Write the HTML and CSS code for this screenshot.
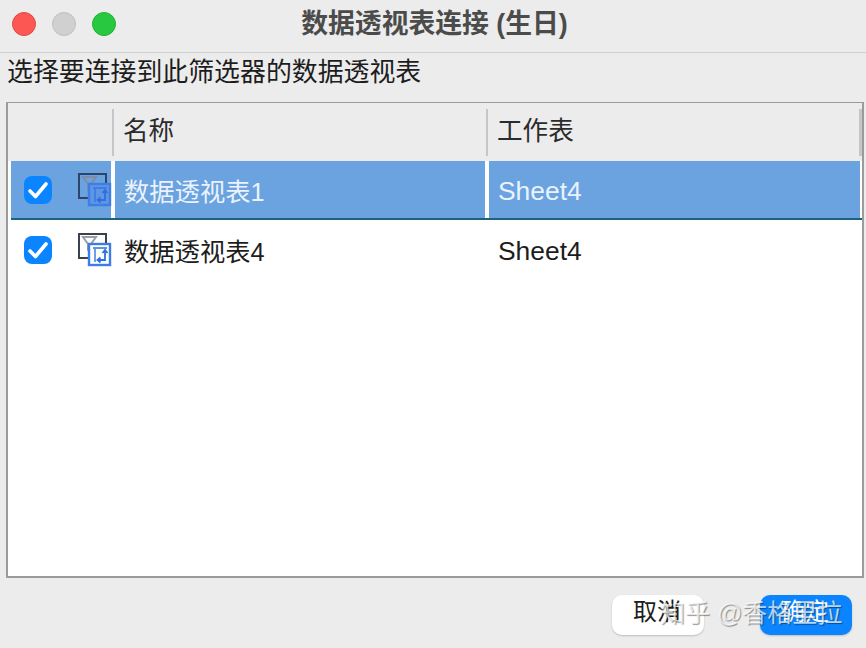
FILE: index.html
```html
<!DOCTYPE html>
<html lang="zh-CN">
<head>
    <meta charset="UTF-8">
    <title>数据透视表连接 (生日)</title>
    <link rel="stylesheet" href="styles.css">
</head>
<body>
    <div class="window">
        <header class="titlebar">
            <div class="lights">
                <span class="light red"></span>
                <span class="light gray"></span>
                <span class="light green"></span>
            </div>
            <h1>数据透视表连接 (生日)</h1>
        </header>
        <p class="prompt">选择要连接到此筛选器的数据透视表</p>
        <div class="table-frame">
            <div class="table-head">
                <div class="head-cell head-check"></div>
                <div class="head-cell">名称</div>
                <div class="head-cell">工作表</div>
            </div>
            <div class="row selected">
                <div class="cell cell-check">
                    <span class="checkbox">
                        <svg viewBox="0 0 28 28" width="28" height="28"><path d="M6 15l5.500 5.500L22 8" fill="none" stroke="#fff" stroke-width="3.600" stroke-linecap="round" stroke-linejoin="round"/></svg>
                    </span>
                    <svg class="table-icon" viewBox="0 0 34 34" width="34" height="34">
                        <rect x="1" y="1" width="27" height="24" fill="none" stroke="#2f4468" stroke-width="2"/>
                        <path d="M5 4h13l-5 7v8l-3-2v-6z" fill="none" stroke="#7f8ea8" stroke-width="2"/>
                        <rect x="11" y="11" width="21" height="21" fill="#5f96e2" stroke="#3d7ee6" stroke-width="2.400"/>
                        <path d="M15 15h14M17 15v14" fill="none" stroke="#3d7ee6" stroke-width="1.800"/>
                        <path d="M27 17v10h-7M24.500 20l2.500-3 2.500 3M22.500 24.500l-3 2.500 3 2.500" fill="none" stroke="#2f6fe0" stroke-width="1.800"/>
                    </svg>
                </div>
                <div class="cell">数据透视表1</div>
                <div class="cell"><span class="latin">Sheet4</span></div>
            </div>
            <div class="row">
                <div class="cell cell-check">
                    <span class="checkbox">
                        <svg viewBox="0 0 28 28" width="28" height="28"><path d="M6 15l5.500 5.500L22 8" fill="none" stroke="#fff" stroke-width="3.600" stroke-linecap="round" stroke-linejoin="round"/></svg>
                    </span>
                    <svg class="table-icon" viewBox="0 0 34 34" width="34" height="34">
                        <rect x="1" y="1" width="27" height="24" fill="#fff" stroke="#3a4252" stroke-width="2"/>
                        <path d="M5 4h13l-5 7v8l-3-2v-6z" fill="none" stroke="#9a9ea6" stroke-width="2"/>
                        <rect x="11" y="11" width="21" height="21" fill="#fff" stroke="#3d7ee6" stroke-width="2.400"/>
                        <path d="M15 15h14M17 15v14" fill="none" stroke="#5f96e2" stroke-width="1.800"/>
                        <path d="M27 17v10h-7M24.500 20l2.500-3 2.500 3M22.500 24.500l-3 2.500 3 2.500" fill="none" stroke="#2f6fe0" stroke-width="1.800"/>
                    </svg>
                </div>
                <div class="cell">数据透视表4</div>
                <div class="cell"><span class="latin">Sheet4</span></div>
            </div>
        </div>
        <footer class="actions">
            <button class="btn">取消</button>
            <button class="btn primary">确定</button>
        </footer>
        <div class="watermark">知乎 @香格里拉</div>
    </div>
</body>
</html>
```

FILE: styles.css
```css
* {
    box-sizing: border-box;
}
body {
    margin: 0;
    background: #ececec;
    color: #1d1d1d;
    font-family: "Liberation Sans", "Noto Sans CJK SC", sans-serif;
}
.window {
    position: relative;
    width: 866px;
    height: 648px;
    display: flex;
    flex-direction: column;
    overflow: hidden;
}
.titlebar {
    height: 53px;
    flex: none;
    display: flex;
    align-items: center;
    justify-content: center;
    position: relative;
    border-bottom: 1px solid #cfcfcf;
}
.titlebar h1 {
    margin: 0 0 5px 3px;
    font-size: 26.8px;
    line-height: 38px;
    font-weight: bold;
    color: #4b4b4b;
}
.lights {
    position: absolute;
    left: 12px;
    top: 12px;
    display: flex;
    gap: 16px;
}
.light {
    width: 24px;
    height: 24px;
    border-radius: 50%;
}
.red {
    background: #fc5753;
    border: 1px solid #df4744;
}
.gray {
    background: #d0d0d0;
    border: 1px solid #c0c0c0;
}
.green {
    background: #28c840;
    border: 1px solid #1fb233;
}
.prompt {
    margin: 0;
    height: 49px;
    flex: none;
    padding: 1px 0 0 7px;
    font-size: 25.9px;
    line-height: 36px;
}
.table-frame {
    margin: 0 2px 0 6px;
    height: 476px;
    flex: none;
    background: #fff;
    border: 2px solid #9b9b9b;
    border-top-width: 1px;
}
.table-head {
    height: 58px;
    display: grid;
    grid-template-columns: 104px 374px 1fr;
    background: #ececec;
    padding-top: 6px;
}
.head-cell {
    height: 47px;
    padding: 0 0 0 9px;
    border-left: 2px solid #c6c6c6;
    font-size: 25.6px;
    line-height: 44px;
    color: #2b2b2b;
}
.head-check {
    border-left: 0;
}
.table-head .head-cell:last-child {
    border-right: 3px solid #c6c6c6;
}
.row {
    height: 60px;
    display: grid;
    grid-template-columns: 104px 374px 1fr;
    margin-left: 3px;
    font-size: 25.3px;
}
.cell {
    height: 59px;
    display: flex;
    align-items: center;
    padding-left: 9px;
    margin-right: 4px;
}
.row .cell:nth-child(3) {
    margin-right: 2px;
    padding-left: 9px;
}
.cell-check {
    padding-left: 13px;
    gap: 26px;
}
.latin {
    font-size: 26.4px;
    padding-top: 3px;
}
.row.selected {
    height: 59px;
    border-bottom: 2px solid #1f5f80;
}
.selected .cell {
    height: 57px;
    background: #6ba2e0;
    color: #eaf3fc;
}
.checkbox {
    width: 28px;
    height: 28px;
    flex: none;
    border-radius: 8px;
    background: #0a84ff;
    display: block;
}
.checkbox svg {
    display: block;
}
.table-icon {
    flex: none;
    margin-top: 1px;
}
.actions {
    flex: 1;
    display: flex;
    justify-content: flex-end;
    align-items: flex-start;
    gap: 56px;
    padding: 17px 14px 0 0;
}
.btn {
    width: 92px;
    height: 40px;
    border: 0;
    border-radius: 10px;
    background: #fff;
    color: #1d1d1d;
    font-family: inherit;
    font-size: 24px;
    line-height: 34px;
    padding: 0 2px 6px 0;
    box-shadow: 0 1px 2px rgba(0,0,0,0.2);
}
.primary {
    background: #0a84ff;
    color: #fff;
}
.watermark {
    position: absolute;
    left: 660px;
    top: 595px;
    font-size: 25px;
    line-height: 36px;
    white-space: nowrap;
    color: rgba(255,255,255,0.72);
    text-shadow: 1px 1px 1px rgba(0,0,0,0.4);
}
```
